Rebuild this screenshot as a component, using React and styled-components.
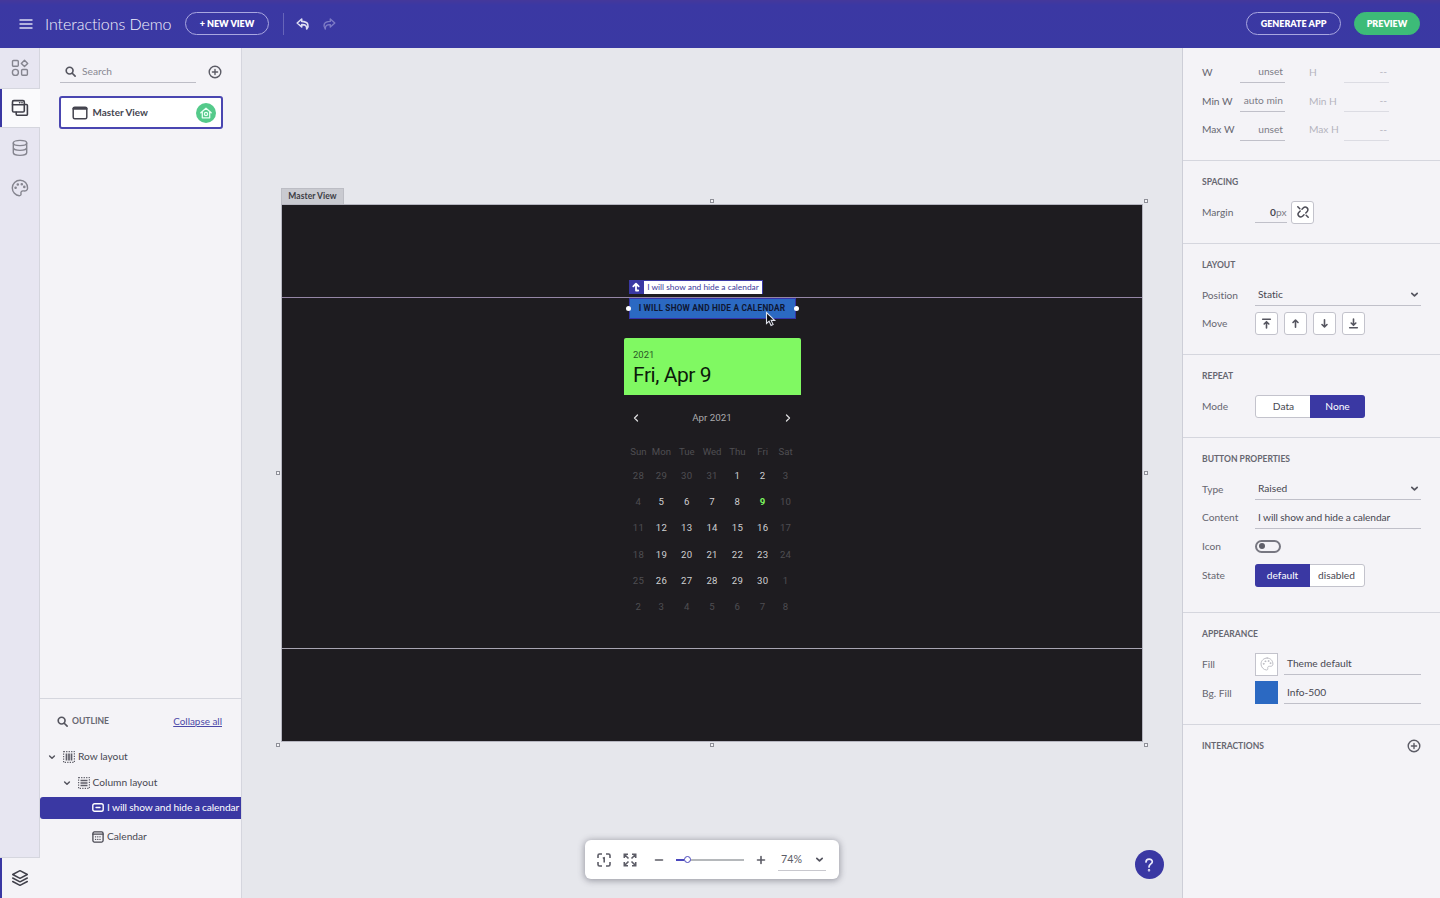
import React from "react";
import styled, { createGlobalStyle, css } from "styled-components";

const Global = createGlobalStyle`
  * { box-sizing: border-box; }
  body { margin: 0; overflow: hidden; }
`;

const c = {
  brand: "#3a38a3",
  panel: "#f4f3f7",
  rail: "#e7e6f1",
  line: "#d5d6de",
  ink: "#484852",
  mute: "#666670",
  faint: "#b4b4be",
};

const Page = styled.div`
  display: flex;
  flex-direction: column;
  width: 1440px;
  height: 898px;
  overflow: hidden;
  font-family: Lato, "Open Sans", sans-serif;
  font-size: 10.2px;
  font-variant-ligatures: none;
  color: ${c.ink};
`;

const Txt = styled.span`
  white-space: nowrap;
  line-height: 1.2;
  letter-spacing: ${(p) => p.$ls || 0}px;
`;

/* ---------- header ---------- */
const Header = styled.header`
  display: flex;
  align-items: center;
  flex: none;
  height: 48px;
  padding: 0 20px 1px 19px;
  color: #fff;
  background: linear-gradient(#45389b 0, #3b38a3 5px, #3a39a3 100%);
`;
const Title = styled.h1`
  margin: 0 12px 0 12px;
  width: 128px;
  font-size: 16px;
  font-weight: 300;
  line-height: 20px;
  letter-spacing: -0.06px;
  white-space: nowrap;
  color: #f3f3fd;
`;
const Pill = styled.button`
  display: flex;
  align-items: center;
  justify-content: center;
  width: ${(p) => p.$w}px;
  height: 23px;
  padding: 0;
  border: 1.5px solid ${(p) => (p.$fill ? p.$fill : "#a9a7e0")};
  border-radius: 12px;
  background: ${(p) => p.$fill || "transparent"};
  color: #fff;
  font: 800 9px/1 Lato, sans-serif;
  white-space: nowrap;
`;
const VRule = styled.i`
  width: 1px;
  height: 22px;
  margin: 0 12px 0 14px;
  background: #6765b9;
`;
const HeaderEnd = styled.div`
  display: flex;
  gap: 13px;
  margin-left: auto;
`;

/* ---------- body ---------- */
const Body = styled.div`
  display: flex;
  flex: 1;
  min-height: 0;
`;
const Rail = styled.nav`
  display: flex;
  flex-direction: column;
  flex: none;
  width: 40px;
  background: ${c.rail};
`;
const RailItem = styled.div`
  display: flex;
  align-items: center;
  justify-content: center;
  height: 40px;
  color: #85858f;
  border-right: 1px solid ${c.line};
  ${(p) =>
    p.$active &&
    css`
      background: linear-gradient(90deg, ${c.brand} 2.5px, ${p.$tone || "#fafafc"} 2.5px);
      color: #3f3f49;
      height: ${p.$h || 40}px;
      border: solid ${c.line};
      border-width: 1px 0 ${p.$h ? 0 : 1}px;
    `}
`;
const RailGap = styled.div`
  flex: 1;
  border-right: 1px solid ${c.line};
`;

const LeftPanel = styled.aside`
  display: flex;
  flex-direction: column;
  flex: none;
  width: 202px;
  background: ${c.panel};
  border-right: 1px solid ${c.line};
`;
const SearchRow = styled.div`
  display: flex;
  align-items: center;
  height: 22px;
  margin: 13px 19px 13px 20px;
  justify-content: space-between;
`;
const SearchField = styled.div`
  display: flex;
  align-items: center;
  gap: 6px;
  width: 136px;
  height: 22px;
  padding: 0 0 0 5px;
  border-bottom: 1px solid #bdbdc6;
  color: #888892;
`;
const ViewCard = styled.div`
  display: flex;
  align-items: center;
  height: 33px;
  margin: 0 18px 0 18.5px;
  padding: 0 5px 0 11px;
  border: 2px solid #4a46b1;
  border-radius: 3px;
  background: #fff;
  color: #45454f;
  font-size: 9.9px;
  font-weight: 700;
`;
const CardName = styled(Txt)`
  margin-left: 5px;
  flex: 1;
`;
const HomeBadge = styled.span`
  display: flex;
  align-items: center;
  justify-content: center;
  width: 20px;
  height: 20px;
  border-radius: 50%;
  background: #54ca8a;
`;
const Outline = styled.section`
  display: flex;
  flex-direction: column;
  height: 200px;
  margin-top: auto;
  border-top: 1px solid ${c.line};
`;
const OutlineHead = styled.div`
  display: flex;
  align-items: center;
  gap: 4px;
  height: 22px;
  margin: 11px 19px 14px 17px;
  color: ${c.mute};
  font-size: 8.6px;
  font-weight: 700;
`;
const Collapse = styled.a`
  margin-left: auto;
  font-size: 9.9px;
  font-weight: 400;
  color: #4b49a8;
  text-decoration: underline;
  text-underline-offset: 1px;
  white-space: nowrap;
`;
const TreeRow = styled.div`
  display: flex;
  align-items: center;
  flex: none;
  gap: 3px;
  height: 22px;
  margin-bottom: ${(p) => p.$after}px;
  padding-left: ${(p) => p.$indent}px;
  padding-bottom: 1px;
  border-radius: 3px 0 0 3px;
  overflow: hidden;
  background: ${(p) => (p.$active ? c.brand : "transparent")};
  color: ${(p) => (p.$active ? "#fff" : c.ink)};
`;
const Caret = styled.span`
  display: flex;
  width: 12px;
`;

/* ---------- canvas ---------- */
const Canvas = styled.main`
  position: relative;
  flex: 1;
  padding: 140px 40px 0 40px;
  background: #e6e7ec;
`;
const Tab = styled.div`
  display: flex;
  align-items: center;
  justify-content: center;
  width: 63px;
  height: 17px;
  margin-left: -1px;
  background: #c9cad0;
  border: 1px solid #bcbdc4;
  color: #3c3c44;
  font-size: 8.5px;
  font-weight: 700;
`;
const Artboard = styled.div`
  position: relative;
  display: grid;
  grid-template-rows: 92px 352px 1fr;
  height: 536px;
  background: #1e1c20;
  box-shadow: 0 0 0 1px #b6b6c0;
`;
const Middle = styled.div`
  display: flex;
  flex-direction: column;
  align-items: center;
  border: solid #a8a5b2;
  border-width: 1px 0;
  border-top-color: #9586a6;
`;
const Handle = styled.i`
  position: absolute;
  left: ${(p) => p.$x}px;
  top: ${(p) => p.$y}px;
  width: 4px;
  height: 4px;
  background: #f5f5f8;
  border: 1px solid #8f9098;
`;
const CtaButton = styled.div`
  position: relative;
  display: flex;
  align-items: center;
  justify-content: center;
  width: 167px;
  height: 21px;
  margin-bottom: 19px;
  border: 1px solid #3433a8;
  background: #2b69c2;
  color: #0f1733;
  font: 700 8.3px/1 Roboto, sans-serif;
`;
const Knob = styled.i`
  position: absolute;
  top: 7px;
  ${(p) => p.$side}: -4px;
  width: 5px;
  height: 5px;
  border-radius: 50%;
  background: #fff;
`;
const Tag = styled.div`
  position: absolute;
  top: -19px;
  left: -1px;
  display: flex;
  height: 14px;
  background: ${c.brand};
`;
const TagIcon = styled.span`
  display: flex;
  align-items: center;
  justify-content: center;
  width: 15px;
`;
const TagName = styled.span`
  display: flex;
  align-items: center;
  justify-content: center;
  width: 118px;
  margin: 0.5px;
  background: #fff;
  color: #3c3a9c;
  font: 400 8.4px/1 Lato, sans-serif;
`;
const Cursor = styled.svg`
  position: absolute;
  left: 135px;
  top: 12px;
`;
const Calendar = styled.div`
  width: 177px;
  font-family: Roboto, sans-serif;
  color: #d6d6d8;
`;
const CalHead = styled.div`
  display: flex;
  flex-direction: column;
  gap: 3px;
  height: 57px;
  padding: 11px 9.5px 0;
  border-radius: 2px 2px 0 0;
  background: #80f962;
`;
const CalYear = styled(Txt)`
  font-size: 9.5px;
  color: #2b5726;
`;
const CalDate = styled(Txt)`
  font-size: 21px;
  line-height: 24px;
  color: #0c1a0b;
`;
const CalNav = styled.div`
  display: flex;
  align-items: center;
  justify-content: space-between;
  height: 45px;
  padding: 0 8px;
  font-size: 9.8px;
  color: #aaaaad;
`;
const Days = styled.div`
  display: grid;
  grid-template-columns: 20.5px 25.5px 25.3px 25.3px 25.3px 25.3px 20.5px;
  grid-template-rows: 22.4px repeat(6, 26.2px);
  justify-content: center;
`;
const Day = styled.span`
  display: flex;
  align-items: center;
  justify-content: center;
  font-size: 9.6px;
  letter-spacing: ${(p) => (p.$name ? 0 : 0.3)}px;
  color: ${(p) => (p.$now ? "#7cf55f" : p.$dim ? "#4f4e52" : "#cfcfd1")};
  font-weight: ${(p) => (p.$now ? 700 : 400)};
`;

const ZoomBar = styled.div`
  position: absolute;
  left: 343px;
  bottom: 19px;
  display: flex;
  align-items: center;
  width: 254px;
  height: 39px;
  padding: 0 13px 0 12px;
  border-radius: 6px;
  background: #fff;
  box-shadow: 0 1px 6px 1px rgba(60, 60, 75, 0.42);
  color: #5c5c66;
`;
const Track = styled.div`
  display: flex;
  align-items: center;
  width: 68px;
  height: 2px;
  margin: 0 12px;
  background: linear-gradient(90deg, #4a47bd 8px, #b5b8bb 8px);
`;
const Thumb = styled.i`
  width: 7px;
  height: 7px;
  margin-left: 8px;
  border: 1.5px solid #4a47bd;
  border-radius: 50%;
  background: #fff;
`;
const Percent = styled.div`
  display: flex;
  align-items: center;
  justify-content: space-between;
  width: 48px;
  height: 23px;
  margin-left: 12px;
  padding: 0 2px 0 3px;
  border-bottom: 1px solid #c8c8ce;
  font-size: 10.7px;
`;
const Help = styled.div`
  position: absolute;
  left: 892.5px;
  bottom: 19px;
  display: flex;
  align-items: center;
  justify-content: center;
  width: 29px;
  height: 29px;
  border-radius: 50%;
  background: ${c.brand};
`;

/* ---------- inspector ---------- */
const Inspector = styled.aside`
  flex: none;
  width: 258px;
  padding-top: 9.6px;
  background: ${c.panel};
  border-left: 1px solid #cdced7;
`;
const Section = styled.section`
  padding: ${(p) => (p.$first ? 0 : 13.5)}px 19px ${(p) => p.$pb || 16.3}px;
  border-bottom: ${(p) => (p.$last ? 0 : 1)}px solid ${c.line};
`;
const Heading = styled.h2`
  display: flex;
  align-items: center;
  justify-content: space-between;
  height: 15px;
  margin: 0 0 8px;
  font-size: 8.55px;
  font-weight: 700;
  color: ${c.mute};
`;
const Row = styled.div`
  display: flex;
  align-items: center;
  height: 28.8px;
  color: ${c.mute};
`;
const Label = styled(Txt)`
  flex: none;
  width: ${(p) => p.$w || 53}px;
  color: ${(p) => (p.$off ? c.faint : c.mute)};
`;
const Field = styled.div`
  display: flex;
  align-items: center;
  justify-content: ${(p) => (p.$end ? "flex-end" : "space-between")};
  width: ${(p) => p.$w}px;
  height: 22px;
  margin-right: ${(p) => p.$mr || 0}px;
  padding: 0 ${(p) => (p.$tight ? 0.5 : 2)}px 0 3px;
  border-bottom: 1px solid ${(p) => (p.$off ? "#dcdce3" : "#c0c0c9")};
  color: ${(p) => (p.$off ? c.faint : p.$end ? "#7d7d87" : c.ink)};
`;
const Amount = styled.b`
  color: ${c.ink};
`;
const Square = styled.div`
  display: flex;
  align-items: center;
  justify-content: center;
  width: 23px;
  height: 23px;
  margin-right: ${(p) => p.$mr || 0}px;
  border: 1px solid ${(p) => p.$fill || "#c3c3cc"};
  border-radius: ${(p) => (p.$r === undefined ? 3 : p.$r)}px;
  background: ${(p) => p.$fill || "#fff"};
`;
const Segments = styled.div`
  display: flex;
  width: 110px;
  height: 23px;
  border: 1px solid #c3c3cc;
  border-radius: 3px;
  background: #fff;
`;
const Segment = styled.span`
  display: flex;
  align-items: center;
  justify-content: center;
  flex: 1;
  margin: ${(p) => (p.$on ? "-1px" : 0)};
  padding-bottom: 1px;
  border-radius: ${(p) => (p.$side === "l" ? "3px 0 0 3px" : "0 3px 3px 0")};
  background: ${(p) => (p.$on ? c.brand : "transparent")};
  color: ${(p) => (p.$on ? "#fff" : c.ink)};
`;
const Toggle = styled.div`
  display: flex;
  align-items: center;
  width: 26px;
  height: 13px;
  padding-left: 2px;
  border: 2px solid #777781;
  border-radius: 7px;
`;
const Dot = styled.i`
  width: 6px;
  height: 6px;
  border-radius: 50%;
  background: #5f5f69;
`;

/* ---------- icons ---------- */
const Svg = ({ w = 16, h, vb, sw = 1.5, ml = 0, mr = 0, children, ...rest }) => (
  <Glyph width={w} height={h || w} viewBox={vb || `0 0 ${w} ${h || w}`} strokeWidth={sw} $ml={ml} $mr={mr} {...rest}>
    {children}
  </Glyph>
);
const Glyph = styled.svg`
  display: block;
  flex: none;
  margin: 0 ${(p) => p.$mr}px 0 ${(p) => p.$ml}px;
  fill: none;
  stroke: currentColor;
  stroke-linecap: round;
  stroke-linejoin: round;
`;
const Magnify = ({ s = 10 }) => (
  <Svg w={s} vb="0 0 10 10" sw={1.5} color="#55555f"><circle cx="4.2" cy="4.2" r="3.1" /><path d="M6.6 6.6 9.2 9.2" /></Svg>
);
const PlusCircle = () => (
  <Svg w={14} sw={1.4} color="#5c5c66"><circle cx="7" cy="7" r="5.8" /><path d="M7 4.4v5.2M4.4 7h5.2" /></Svg>
);
const Chevron = ({ s = 8 }) => (
  <Svg w={s} vb="0 0 8 8" sw={1.5} color="#55555f"><path d="M1.6 3 4 5.300 6.400 3" /></Svg>
);
const Palette = ({ s = 18, sw = 1.4, color }) => (
  <Svg w={s} vb="0 0 18 18" sw={sw} color={color}>
    <path d="M9.2 1.3C4.8 1.3 1.3 4.7 1.3 9c0 3.9 3.2 7.5 7 7.7 1.3 0 1.900-.8 1.700-1.900-.4-1.900.5-3.100 2.300-2.900 2 .3 4.200-.1 4.300-2.600C16.700 4.700 13.500 1.300 9.200 1.300Z" />
    <circle cx="4.6" cy="8.800" r=".6" /><circle cx="6.800" cy="5.500" r=".6" /><circle cx="10.800" cy="5.200" r=".6" /><circle cx="13.300" cy="7.900" r=".6" />
  </Svg>
);
const Arrow = ({ down, bar }) => (
  <Svg w={13} sw={1.6} color="#55555f">
    <g transform={down ? "rotate(180 6.5 6.5)" : undefined}>
      {bar ? <path d="M2.700 2.200h7.600M6.500 11V5M4.200 7 6.500 4.700 8.800 7" /> : <path d="M6.500 10.300V3.200M4 5.500 6.500 3 9 5.500" />}
    </g>
  </Svg>
);
const DashedBox = ({ children }) => (
  <Svg w={12} sw={1.200} color="#5f5f69">
    <path strokeDasharray="1.300 1.200" strokeLinecap="butt" d="M.6.6h10.800v10.800H.6Z" />
    {children}
  </Svg>
);

const WEEK = ["Sun", "Mon", "Tue", "Wed", "Thu", "Fri", "Sat"];
const DATES = [28, 29, 30, 31, ...Array.from({ length: 30 }, (_, i) => i + 1), 1, 2, 3, 4, 5, 6, 7, 8];
const isDim = (i) => i < 4 || i > 33 || i % 7 === 0 || i % 7 === 6;
const HANDLES = [[428, -6], [862, -6], [-6, 266], [862, 266], [-6, 538], [428, 538], [862, 538]];
const SIZES = [["W", "unset", "H"], ["Min W", "auto min", "Min H"], ["Max W", "unset", "Max H"]];

export default function App() {
  return (
    <Page>
      <Global />
      <Header>
        <Svg w={14} h={12} sw={1.6} color="#dcdcf2"><path strokeLinecap="butt" d="M.5 2h13M.5 6h13M.5 10h13" /></Svg>
        <Title>Interactions Demo</Title>
        <Pill $w={84}>+ NEW VIEW</Pill>
        <VRule />
        <Svg w={14} sw={1.6} color="#dedef3"><path d="M5.700 2 1.200 6l4.500 4V7.600c3.300-.2 5.300 1 5 4.400 2.400-3 2-7.400-5-7.600Z" /></Svg>
        <Svg w={14} sw={1.4} ml={12} color="#7d7bc6"><path d="M8.300 2 12.800 6l-4.500 4V7.600c-3.300-.2-5.300 1-5 4.400-2.400-3-2-7.400 5-7.600Z" /></Svg>
        <HeaderEnd>
          <Pill $w={95}>GENERATE APP</Pill>
          <Pill $w={66} $fill="#3dbb78">PREVIEW</Pill>
        </HeaderEnd>
      </Header>

      <Body>
        <Rail>
          <RailItem>
            <Svg w={18} sw={1.4}>
              <rect x="1.500" y="1.500" width="5.800" height="5.800" rx="1" /><path d="M13.500 1.200 16.700 4.400 13.500 7.600 10.300 4.400Z" />
              <circle cx="4.400" cy="13.400" r="3" /><rect x="10.600" y="10.500" width="5.800" height="5.800" rx="1" />
            </Svg>
          </RailItem>
          <RailItem $active>
            <Svg w={18} sw={1.6}>
              <path d="M14.200 5.500h1.200a1 1 0 0 1 1 1v8.700a1 1 0 0 1-1 1H6.200a1 1 0 0 1-1-1v-1.800" />
              <rect x="1.500" y="1.600" width="11.800" height="11.400" rx="1.300" /><path d="M1.500 5.800h11.800M8.600 3.700h.2M10.900 3.700h.2" />
            </Svg>
          </RailItem>
          <RailItem>
            <Svg w={18} sw={1.4}>
              <ellipse cx="9" cy="4" rx="6.700" ry="2.600" /><path d="M2.300 4v9.800c0 1.400 3 2.600 6.700 2.600s6.700-1.200 6.700-2.600V4M2.300 8.800c0 1.400 3 2.600 6.700 2.600s6.700-1.200 6.700-2.600" />
            </Svg>
          </RailItem>
          <RailItem><Palette /></RailItem>
          <RailGap />
          <RailItem $active $h={41} $tone={c.panel}>
            <Svg w={18} sw={1.5}>
              <path d="M9 1.700 16.300 5.500 9 9.300 1.700 5.500ZM1.700 9 9 12.800 16.300 9M1.700 12.500 9 16.300l7.300-3.800" />
            </Svg>
          </RailItem>
        </Rail>

        <LeftPanel>
          <SearchRow>
            <SearchField><Magnify s={11} /><Txt>Search</Txt></SearchField>
            <PlusCircle />
          </SearchRow>
          <ViewCard>
            <Svg w={16} h={14} sw={1.5}><rect x="1.200" y="1.200" width="13.600" height="11.600" rx="1.500" /><path d="M1.500 2.700h13" strokeWidth="2.200" /></Svg>
            <CardName>Master View</CardName>
            <HomeBadge>
              <Svg w={14} sw={1.3} color="#e9fff3"><path d="M1.800 6.800 7 2.200l5.200 4.600M3.300 6v5.800h7.400V6" /><circle cx="7" cy="8" r="1.600" /></Svg>
            </HomeBadge>
          </ViewCard>
          <Outline>
            <OutlineHead>
              <Magnify s={11} /><Txt>OUTLINE</Txt><Collapse>Collapse all</Collapse>
            </OutlineHead>
            <TreeRow $indent={8} $after={4}>
              <Caret><Chevron /></Caret>
              <DashedBox><path strokeLinecap="butt" d="M3.500 2.500v7M6 2.500v7M8.500 2.500v7" strokeWidth="1.700" /></DashedBox>
              <Txt>Row layout</Txt>
            </TreeRow>
            <TreeRow $indent={22.5} $after={3}>
              <Caret><Chevron /></Caret>
              <DashedBox><path strokeLinecap="butt" d="M2.500 3.500h7M2.500 6h7M2.500 8.500h7" strokeWidth="1.700" /></DashedBox>
              <Txt>Column layout</Txt>
            </TreeRow>
            <TreeRow $indent={52} $after={7} $active>
              <Svg w={12} h={9} sw={1.4}><rect x=".8" y=".8" width="10.400" height="7.400" rx="1.800" /><path d="M4 4.500h4" /></Svg>
              <Txt $ls={-0.12}>I will show and hide a calendar</Txt>
            </TreeRow>
            <TreeRow $indent={52} $after={0}>
              <Svg w={12} sw={1.3}><rect x=".9" y=".9" width="10.200" height="10.200" rx="1.500" /><path d="M1 3.200h10" /><path strokeDasharray=".2 2" d="M3.500 5.800h6M3.500 8.300h6" /></Svg>
              <Txt>Calendar</Txt>
            </TreeRow>
          </Outline>
        </LeftPanel>

        <Canvas>
          <Tab><Txt $ls={0.05}>Master View</Txt></Tab>
          <Artboard>
            <div />
            <Middle>
              <CtaButton>
                <Txt $ls={0.2}>I WILL SHOW AND HIDE A CALENDAR</Txt>
                <Knob $side="left" /><Knob $side="right" />
                <Tag>
                  <TagIcon><Svg w={10} sw={1.8} color="#fff"><path d="M5 8.500V1.800M2.300 4.300 5 1.600l2.700 2.700M5 8.500h2.200" /></Svg></TagIcon>
                  <TagName><Txt>I will show and hide a calendar</Txt></TagName>
                </Tag>
                <Cursor width="12" height="17" viewBox="0 0 12 17">
                  <path d="M1.500 1.500v11l2.600-2.300 2 4.300 2-.9-2-4.200h3.600Z" fill="#0c0c12" stroke="#dfe1ea" strokeWidth="1.100" />
                </Cursor>
              </CtaButton>
              <Calendar>
                <CalHead>
                  <CalYear>2021</CalYear>
                  <CalDate $ls={-0.45}>Fri, Apr 9</CalDate>
                </CalHead>
                <CalNav>
                  <Svg w={8} sw={1.3} color="#dadadc"><path d="M5.500 1 2.500 4l3 3" /></Svg>
                  <Txt>Apr 2021</Txt>
                  <Svg w={8} sw={1.3} color="#dadadc"><path d="M2.500 1l3 3-3 3" /></Svg>
                </CalNav>
                <Days>
                  {WEEK.map((d) => <Day key={d} $dim $name>{d}</Day>)}
                  {DATES.map((d, i) => <Day key={i} $dim={isDim(i)} $now={i === 12}>{d}</Day>)}
                </Days>
              </Calendar>
            </Middle>
            <div />
            {HANDLES.map(([x, y]) => <Handle key={`${x},${y}`} $x={x} $y={y} />)}
          </Artboard>

          <ZoomBar>
            <Svg w={14} sw={1.6}><path strokeLinecap="butt" d="M1 5V2.500Q1 1 2.500 1H5M9 1h2.500Q13 1 13 2.500V5M13 9v2.500q0 1.500-1.500 1.500H9M5 13H2.500Q1 13 1 11.500V9M5.900 5.500 7.200 4.600V9.500" /></Svg>
            <Svg w={14} sw={1.6} ml={12} mr={17}><path strokeLinecap="butt" strokeLinejoin="miter" d="M1.300 5V1.300H5M1.500 1.500 5.500 5.500M9 1.300h3.700V5M12.500 1.500l-4 4M12.700 9v3.700H9M12.500 12.500l-4-4M5 12.700H1.300V9M1.500 12.500l4-4" /></Svg>
            <Svg w={10} sw={1.6}><path d="M1.500 5h7" /></Svg>
            <Track><Thumb /></Track>
            <Svg w={10} sw={1.6}><path d="M1.500 5h7M5 1.500v7" /></Svg>
            <Percent><Txt>74%</Txt><Chevron s={9} /></Percent>
          </ZoomBar>
          <Help>
            <Svg w={12} h={16} sw={1.7} color="#ecebfb"><path d="M3 5c0-4 6.300-3.800 6.300-.3C9.300 7 6 7 6 10" /><circle cx="6" cy="13.200" r=".4" /></Svg>
          </Help>
        </Canvas>

        <Inspector>
          <Section $first>
            {SIZES.map(([a, v, b]) => (
              <Row key={a}>
                <Label $w={38}>{a}</Label><Field $w={45} $end $mr={24}><Txt>{v}</Txt></Field>
                <Label $w={35} $off>{b}</Label><Field $w={45} $end $off><Txt>--</Txt></Field>
              </Row>
            ))}
          </Section>
          <Section>
            <Heading>SPACING</Heading>
            <Row>
              <Label>Margin</Label>
              <Field $w={32} $end $tight $mr={4}><Txt><Amount>0</Amount>px</Txt></Field>
              <Square>
                <Svg w={14} sw={1.5} color="#4c4c56"><path d="M1.800 1.800 3.800 3.800M10.200 10.200l2 2M6 4.200 7.200 3C8.400 1.800 10 1.800 11.100 2.900s1.100 2.700-.1 3.900L9.800 8M4.200 6 3 7.200C1.800 8.400 1.800 10 2.900 11.100s2.700 1.100 3.900-.1L8 9.800" /></Svg>
              </Square>
            </Row>
          </Section>
          <Section>
            <Heading>LAYOUT</Heading>
            <Row><Label>Position</Label><Field $w={166}><Txt>Static</Txt><Chevron s={9} /></Field></Row>
            <Row>
              <Label>Move</Label>
              <Square $mr={6}><Arrow bar /></Square><Square $mr={6}><Arrow /></Square>
              <Square $mr={6}><Arrow down /></Square><Square><Arrow down bar /></Square>
            </Row>
          </Section>
          <Section>
            <Heading>REPEAT</Heading>
            <Row>
              <Label>Mode</Label>
              <Segments><Segment $side="l">Data</Segment><Segment $side="r" $on>None</Segment></Segments>
            </Row>
          </Section>
          <Section $pb={22.6}>
            <Heading>BUTTON PROPERTIES</Heading>
            <Row><Label>Type</Label><Field $w={166}><Txt>Raised</Txt><Chevron s={9} /></Field></Row>
            <Row><Label>Content</Label><Field $w={166}><Txt $ls={-0.12}>I will show and hide a calendar</Txt></Field></Row>
            <Row><Label>Icon</Label><Toggle><Dot /></Toggle></Row>
            <Row>
              <Label>State</Label>
              <Segments><Segment $side="l" $on>default</Segment><Segment $side="r">disabled</Segment></Segments>
            </Row>
          </Section>
          <Section>
            <Heading>APPEARANCE</Heading>
            <Row>
              <Label>Fill</Label><Square $r={0} $mr={6}><Palette s={14} sw={1.2} color="#b9b9c1" /></Square>
              <Field $w={137}><Txt>Theme default</Txt></Field>
            </Row>
            <Row>
              <Label>Bg. Fill</Label><Square $r={0} $mr={6} $fill="#2b69c2" />
              <Field $w={137}><Txt>Info-500</Txt></Field>
            </Row>
          </Section>
          <Section $last>
            <Heading>INTERACTIONS<PlusCircle /></Heading>
          </Section>
        </Inspector>
      </Body>
    </Page>
  );
}
